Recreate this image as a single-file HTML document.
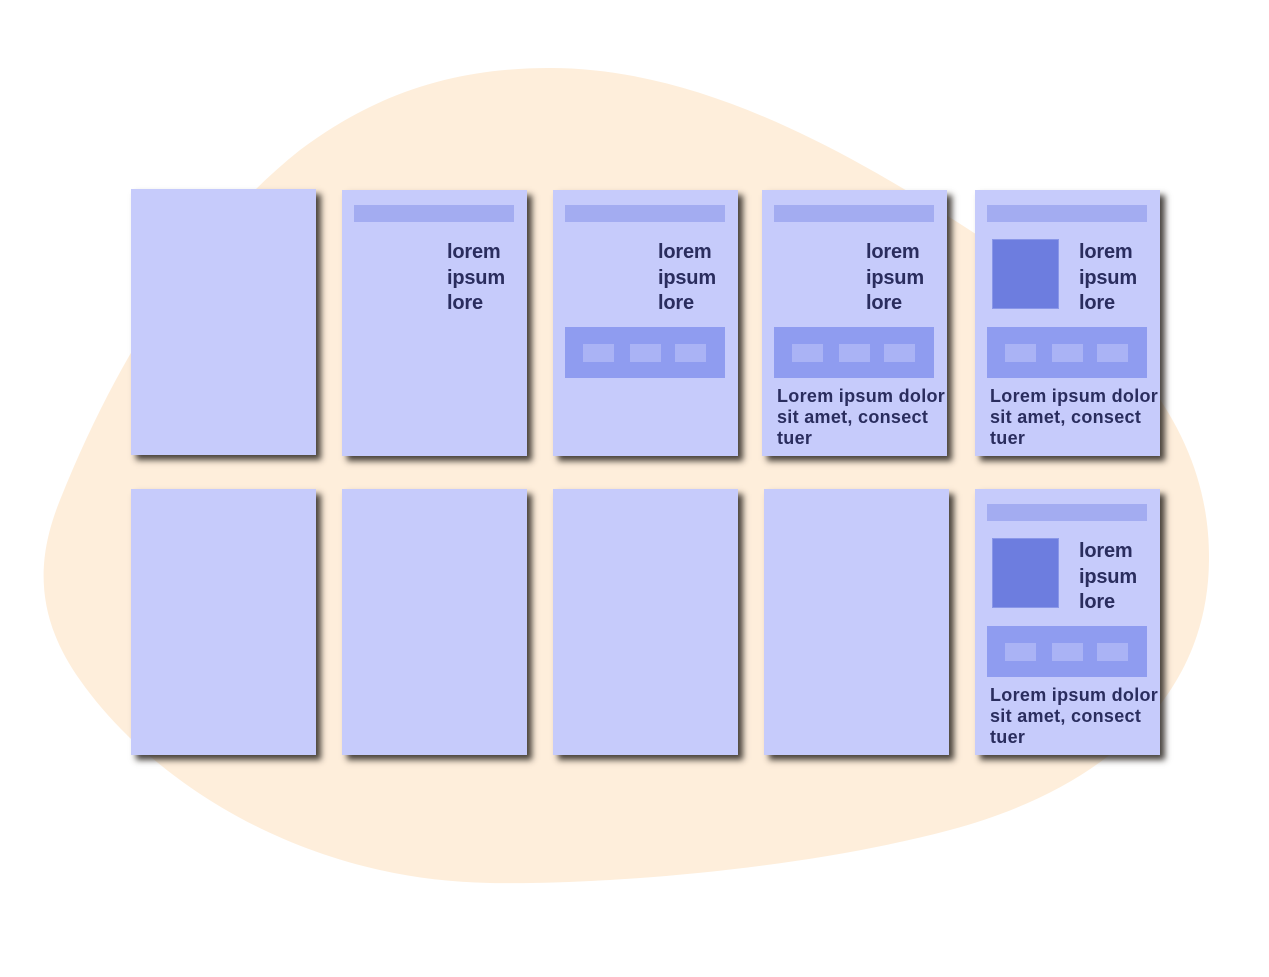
<!DOCTYPE html>
<html><head><meta charset="utf-8"><style>
body{margin:0;width:1269px;height:977px;background:#fff;position:relative;overflow:hidden;font-family:"Liberation Sans",Arial,sans-serif}
svg.blob{position:absolute;left:0;top:0}
.c{position:absolute;width:185px;height:266px;background:#c6cbfb;box-shadow:5px 5px 6px rgba(40,35,30,.85)}
.h{position:absolute;left:12px;top:15px;width:160px;height:17px;background:#a3acf1}
.t{position:absolute;left:105px;top:50px;font-weight:bold;font-size:20px;line-height:25.5px;color:#2a2d5e;letter-spacing:-.2px}
.img{position:absolute;left:17px;top:49px;width:67px;height:70px;background:#6d7ddf;box-sizing:border-box;border:1px solid #8a97e8}
.n{position:absolute;left:12px;top:137px;width:160px;height:51px;background:#8f9cf0}
.n i{position:absolute;top:17px;width:31px;height:18px;background:#aab3f5}
.p{position:absolute;left:15px;top:196px;font-weight:bold;font-size:18px;line-height:21px;color:#2a2d5e;white-space:nowrap;letter-spacing:.3px}
</style></head><body>
<svg class="blob" width="1269" height="977"><path fill="#feeedb" d="M550,68 C700,68 850,150 1000,250 C1150,350 1210,450 1209,560 C1208,700 1100,790 950,830 C800,870 600,885 490,883 C300,880 150,780 80,680 C30,610 40,550 60,500 C120,350 200,230 300,150 C380,90 460,68 550,68Z"/></svg>

<div class="c" style="left:131px;top:189px"></div>
<div class="c" style="left:342px;top:190px"><div class="h"></div><div class="t">lorem<br>ipsum<br>lore</div></div>
<div class="c" style="left:553px;top:190px"><div class="h"></div><div class="t">lorem<br>ipsum<br>lore</div><div class="n"><i style="left:18px"></i><i style="left:65px"></i><i style="left:110px"></i></div></div>
<div class="c" style="left:762px;top:190px"><div class="h"></div><div class="t" style="left:104px">lorem<br>ipsum<br>lore</div><div class="n"><i style="left:18px"></i><i style="left:65px"></i><i style="left:110px"></i></div><div class="p">Lorem ipsum dolor<br>sit amet, consect<br>tuer</div></div>
<div class="c" style="left:975px;top:190px"><div class="h"></div><div class="img"></div><div class="t" style="left:104px">lorem<br>ipsum<br>lore</div><div class="n"><i style="left:18px"></i><i style="left:65px"></i><i style="left:110px"></i></div><div class="p">Lorem ipsum dolor<br>sit amet, consect<br>tuer</div></div>

<div class="c" style="left:131px;top:489px"></div>
<div class="c" style="left:342px;top:489px"></div>
<div class="c" style="left:553px;top:489px"></div>
<div class="c" style="left:764px;top:489px"></div>
<div class="c" style="left:975px;top:489px"><div class="h"></div><div class="img"></div><div class="t" style="left:104px">lorem<br>ipsum<br>lore</div><div class="n"><i style="left:18px"></i><i style="left:65px"></i><i style="left:110px"></i></div><div class="p">Lorem ipsum dolor<br>sit amet, consect<br>tuer</div></div>
</body></html>
